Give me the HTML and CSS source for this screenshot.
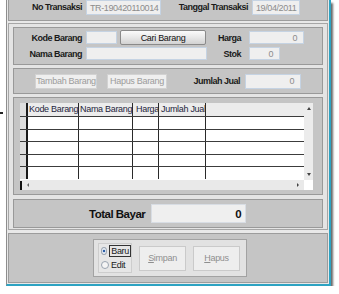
FILE: index.html
```html
<!DOCTYPE html>
<html lang="id">
<head>
    <meta charset="UTF-8">
    <title>Transaksi Penjualan</title>
    <link rel="stylesheet" href="styles.css">
</head>
<body>

    <div class="stray"></div>

    <div class="window">
        <div class="head">
            <span class="lbl lbl-no">No Transaksi</span>
            <span class="field f-no">TR-190420110014</span>
            <span class="lbl lbl-tgl">Tanggal Transaksi</span>
            <span class="field f-tgl">19/04/2011</span>
        </div>

        <div class="main">
            <div class="box info">
                <div class="row row1">
                    <span class="lbl lbl-kode">Kode Barang</span>
                    <span class="field f-kode"></span>
                    <button class="btn-cari">Cari Barang</button>
                    <span class="lbl lbl-harga">Harga</span>
                    <span class="field num f-harga">0</span>
                </div>
                <div class="row row2">
                    <span class="lbl lbl-kode">Nama Barang</span>
                    <span class="field f-nama"></span>
                    <span class="lbl lbl-stok">Stok</span>
                    <span class="field num f-stok">0</span>
                </div>
            </div>

            <div class="box actions">
                <span class="btn-off b-tambah">Tambah Barang</span>
                <span class="btn-off b-hapus">Hapus Barang</span>
                <span class="lbl lbl-jumlah">Jumlah Jual</span>
                <span class="field num f-jumlah">0</span>
            </div>

            <div class="box grid">
                <div class="tbl-wrap">
                    <div class="viewport">
                        <div class="tr th">
                            <span class="rh"></span>
                            <span class="c1">Kode Barang</span>
                            <span class="c2">Nama Barang</span>
                            <span class="c3">Harga</span>
                            <span class="c4">Jumlah Jual</span>
                            <span class="c5"></span>
                        </div>
                        <div class="tr h12"><span class="rh"></span><span class="c1"></span><span class="c2"></span><span class="c3"></span><span class="c4"></span><span class="c5"></span></div>
                        <div class="tr h13"><span class="rh"></span><span class="c1"></span><span class="c2"></span><span class="c3"></span><span class="c4"></span><span class="c5"></span></div>
                        <div class="tr h13"><span class="rh"></span><span class="c1"></span><span class="c2"></span><span class="c3"></span><span class="c4"></span><span class="c5"></span></div>
                        <div class="tr h12"><span class="rh"></span><span class="c1"></span><span class="c2"></span><span class="c3"></span><span class="c4"></span><span class="c5"></span></div>
                        <div class="tr h13"><span class="rh"></span><span class="c1"></span><span class="c2"></span><span class="c3"></span><span class="c4"></span><span class="c5"></span></div>
                    </div>
                    <div class="vscroll">
                        <span class="arr up"></span>
                        <span class="arr down"></span>
                    </div>
                    <div class="hscroll">
                        <span class="knob"></span>
                        <span class="arr left"></span>
                        <span class="arr right"></span>
                    </div>
                    <div class="corner"></div>
                </div>
            </div>

            <div class="box total">
                <span class="lbl-total">Total Bayar</span>
                <span class="field f-total">0</span>
            </div>
        </div>

        <div class="foot">
            <div class="group">
                <div class="radios">
                    <label class="radio on"><span class="dot"></span><span class="focus">Baru</span></label>
                    <label class="radio"><span class="dot"></span><span>Edit</span></label>
                </div>
                <span class="btn-big"><u>S</u>impan</span>
                <span class="btn-big"><u>H</u>apus</span>
            </div>
        </div>
    </div>

</body>
</html>
```

FILE: styles.css
```css
body {
    margin: 0;
    background: #ffffff;
    font-family: "Liberation Sans", Arial, sans-serif;
    font-size: 9px;
    letter-spacing: -0.3px;
    color: #1a1a1a;
    position: relative;
}

.stray {
    position: absolute;
    left: 0;
    top: 112px;
    width: 3px;
    height: 2px;
    background: #222;
}

.window {
    margin-left: 6px;
    width: 325px;
    height: 286px;
    box-sizing: border-box;
    background: #e8e8e8;
    border-left: 1px solid #8e8e8e;
    border-right: 2px solid #2ea3c2;
    border-bottom: 2px solid #2ea3c2;
    box-shadow: 2px 3px 2px rgba(40, 40, 40, 0.7);
    padding: 0 1px 0 1px;
}

.lbl {
    font-weight: bold;
    text-align: right;
    white-space: nowrap;
    letter-spacing: -0.5px;
}

.field {
    box-sizing: border-box;
    background: #efefef;
    border: 1px solid #c5d3e3;
    color: #8c8c8c;
    padding: 0 3px;
    white-space: nowrap;
    display: flex;
    align-items: center;
    letter-spacing: -0.4px;
}

.field.num {
    justify-content: flex-end;
    padding-right: 6px;
}

/* header */
.head {
    height: 21px;
    box-sizing: border-box;
    background: #c5c5c5;
    border: 1px solid #9c9c9c;
    border-top: none;
    display: flex;
    align-items: flex-start;
    padding-left: 21px;
}

.head .lbl {
    line-height: 15px;
}

.head .field {
    height: 15px;
}

.lbl-no { width: 52px; }
.f-no { width: 75px; margin-left: 4px; }
.lbl-tgl { width: 87px; }
.f-tgl { width: 48px; margin-left: 4px; }

/* main panel */
.main {
    margin-top: 2px;
    height: 207px;
    box-sizing: border-box;
    background: #e4e4e4;
    border: 1px solid #a6a6a6;
    padding: 3px 4px 0 4px;
}

.box {
    box-sizing: border-box;
    background: #c5c5c5;
    border: 1px solid #999999;
    width: 310px;
}

.info {
    height: 38px;
    margin-bottom: 3px;
    padding-top: 2px;
}

.row {
    display: flex;
    align-items: center;
}

.row1 { height: 15px; }
.row2 { height: 13px; margin-top: 2px; }

.lbl-kode { width: 68px; }

.row1 .field { height: 13px; }
.row2 .field { height: 13px; }

.f-kode { width: 31px; margin-left: 4px; }

.btn-cari {
    width: 86px;
    height: 15px;
    margin-left: 3px;
    padding: 0;
    font: inherit;
    letter-spacing: -0.3px;
    color: #111;
    background: linear-gradient(#fbfbfb, #e6e6e6 55%, #d2d2d2);
    border: 1px solid #8a8a8a;
    border-radius: 2px;
}

.lbl-harga { width: 35px; }
.f-harga { width: 55px; margin-left: 8px; }

.f-nama { width: 121px; margin-left: 4px; }
.lbl-stok { width: 34px; }
.f-stok { width: 31px; margin-left: 8px; }

/* tambah / hapus */
.actions {
    height: 26px;
    display: flex;
    align-items: center;
    padding-left: 21px;
    margin-bottom: 3px;
}

.btn-off {
    box-sizing: border-box;
    height: 15px;
    background: #efefef;
    border: 1px solid #d2d2d2;
    color: #9c9c9c;
    white-space: nowrap;
    display: flex;
    align-items: center;
    justify-content: center;
}

.b-tambah { width: 62px; }
.b-hapus { width: 60px; margin-left: 10px; }
.lbl-jumlah { width: 73px; }
.f-jumlah { width: 56px; height: 15px; margin-left: 5px; }

/* table */
.grid {
    height: 98px;
    margin-bottom: 4px;
    padding: 5px 0 0 6px;
}

.tbl-wrap {
    display: grid;
    grid-template-columns: 284px 9px;
    grid-template-rows: 77px 10px;
}

.viewport {
    background: #ffffff;
    overflow: hidden;
}

.tr {
    display: grid;
    grid-template-columns: 6px 52px 54px 26px 47px 99px;
}

.tr span {
    box-sizing: border-box;
    border-left: 1px solid #2a2a2a;
    white-space: nowrap;
    overflow: hidden;
}

.tr span.rh {
    border-left: none;
    background: #dedede;
}

.tr span.c1 {
    border-left: 2px solid #1a1a1a;
}

.th {
    height: 13px;
    background: #ececec;
    color: #1e1e3c;
    line-height: 13px;
}

.th span { padding-left: 1px; }
.th span.c3 { padding-left: 3px; }
.th span.c4 { padding-left: 2px; }

.h12, .h13 {
    border-top: 1px solid #3c3c3c;
    box-sizing: border-box;
}

.h12 { height: 12.5px; }
.h13 { height: 12.6px; }

.vscroll {
    background: #ececec;
    position: relative;
}

.hscroll {
    background: #e9e9e9;
    position: relative;
}

.corner {
    background: #ffffff;
}

.arr {
    position: absolute;
    width: 0;
    height: 0;
    border: 2px solid transparent;
}

.arr.up { left: 3px; top: 4px; border-bottom: 3px solid #444; border-top: none; }
.arr.down { left: 3px; bottom: 4px; border-top: 3px solid #444; border-bottom: none; }
.arr.left { left: 7px; top: 3px; border-right: 2px solid #666; border-left: none; }
.arr.right { right: 5px; top: 3px; border-left: 2px solid #444; border-right: none; }

.knob {
    position: absolute;
    left: 0;
    top: 1px;
    width: 2px;
    height: 9px;
    background: #111;
}

/* total */
.total {
    height: 29px;
    display: flex;
    align-items: center;
    padding-left: 75px;
}

.lbl-total {
    font-weight: bold;
    font-size: 11.5px;
    letter-spacing: -0.5px;
    color: #111;
}

.f-total {
    width: 95px;
    height: 19px;
    margin-left: 6px;
    justify-content: flex-end;
    padding-right: 4px;
    font-weight: bold;
    font-size: 11.5px;
    color: #111;
    border-color: #d8dde4;
}

/* footer */
.foot {
    margin-top: 3px;
    height: 50px;
    box-sizing: border-box;
    background: #c5c5c5;
    border: 1px solid #9c9c9c;
    display: flex;
    justify-content: center;
    padding: 5px 0 0 4px;
}

.group {
    width: 154px;
    height: 38px;
    box-sizing: border-box;
    background: #e2e2e2;
    border: 1px solid #a2a2a2;
    display: flex;
    align-items: center;
    padding-left: 4px;
}

.radios {
    width: 34px;
    height: 30px;
    box-sizing: border-box;
    border: 1px solid #cdcdcd;
    background: #e6e6e6;
    display: flex;
    flex-direction: column;
    justify-content: center;
    gap: 2px;
    padding-left: 2px;
}

.radio {
    display: flex;
    align-items: center;
    height: 12px;
}

.dot {
    width: 6px;
    height: 6px;
    border-radius: 50%;
    border: 1px solid #9aa4b0;
    background: #f4f4f4;
    margin-right: 2px;
}

.radio.on .dot {
    background: radial-gradient(circle, #2c5fa8 0 35%, #e8eef6 45%);
}

.focus {
    border: 1px solid #333;
    padding: 0 1px;
    line-height: 10px;
}

.btn-big {
    box-sizing: border-box;
    width: 47px;
    height: 25px;
    margin-left: 7px;
    background: #eeeeee;
    border: 1px solid #cacaca;
    color: #8e8e8e;
    display: flex;
    align-items: center;
    justify-content: center;
}
```
